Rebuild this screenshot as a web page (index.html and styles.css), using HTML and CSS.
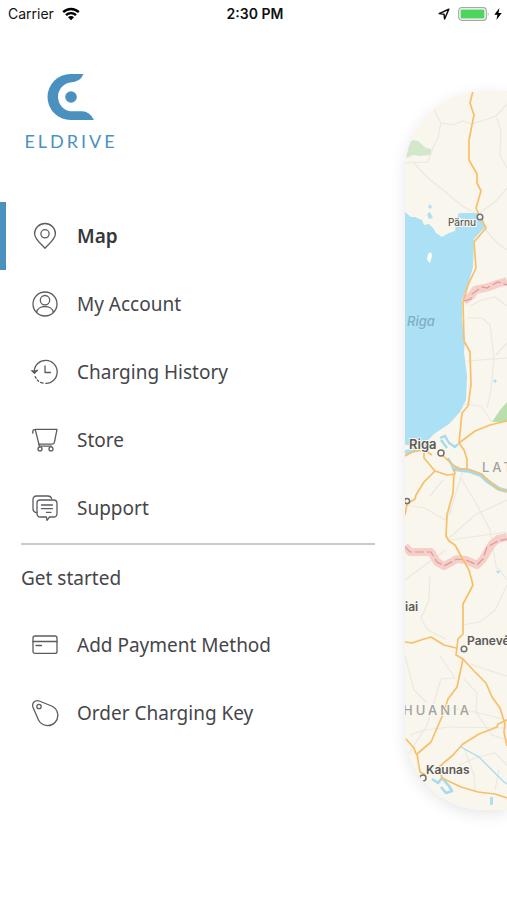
FILE: index.html
```
<!DOCTYPE html>
<html lang="en">
<head>
<meta charset="utf-8">
<meta name="viewport" content="width=device-width, initial-scale=1">
<title>Eldrive</title>
<link rel="stylesheet" href="styles.css">
</head>
<body>
<div class="app">
  <header class="status">
    <div class="status-left">
      <span>Carrier</span>
      <svg width="18" height="14" viewBox="0 0 18 14" aria-hidden="true">
        <g fill="none" stroke="#000" stroke-width="2.4">
          <path d="M1.2 5.2A11.2 11.2 0 0 1 16.8 5.2"/>
          <path d="M4 8.2A7 7 0 0 1 14 8.2"/>
        </g>
        <path d="M9 13.2L6 10.2A4.2 4.2 0 0 1 12 10.2Z"/>
      </svg>
    </div>
    <time class="status-time">2:30 PM</time>
    <div class="status-right">
      <svg width="12" height="12" viewBox="0 0 12 12" aria-hidden="true"><path d="M10.8 1.2L1.2 5.6L6 6.2L6.6 11Z" fill="none" stroke="#111" stroke-width="1.5" stroke-linejoin="round"/></svg>
      <svg width="32" height="14" viewBox="0 0 32 14" aria-hidden="true">
        <rect x=".7" y=".7" width="27.6" height="12.6" rx="3" fill="#fff" stroke="#a8a8a8" stroke-width="1.2"/>
        <rect x="2.6" y="2.6" width="23.8" height="8.8" rx="1" fill="#4cd55f"/>
        <path d="M29.8 4.8Q31.6 7 29.8 9.2Z" fill="#a8a8a8"/>
      </svg>
      <svg width="8" height="12" viewBox="0 0 8 12" aria-hidden="true"><path d="M5.4 0L.3 6.7H3.4L2.4 12L7.7 5.1H4.5Z"/></svg>
    </div>
  </header>

  <div class="body">
    <div class="drawer">
      <div class="brand">
        <svg width="48" height="48" viewBox="0 0 48 48" aria-hidden="true">
          <path d="M36.500 1H23.500A23 23 0 0 0 23.500 47H47Q42.500 38.300 35 38.300H23.500A14.600 14.600 0 0 1 23.500 9.400Q33 9.400 36.500 1Z" fill="#4b91bf"/>
          <circle cx="24" cy="24" r="5.800" fill="#4b91bf"/>
        </svg>
        <span class="wordmark">ELDRIVE</span>
      </div>

      <nav class="menu" aria-label="Main">
        <a class="item active" href="#map">
          <svg class="icon" viewBox="0 0 28 28" aria-hidden="true"><path d="M14 26.300C9.500 21.200 3.600 17.200 3.600 11.800A10.400 10.300 0 0 1 24.400 11.800C24.400 17.200 18.500 21.200 14 26.300Z"/><circle cx="14" cy="11.800" r="4.100"/></svg>
          <span>Map</span>
        </a>
        <a class="item" href="#account">
          <svg class="icon" viewBox="0 0 28 28" aria-hidden="true"><circle cx="14" cy="14" r="12"/><circle cx="14" cy="10.200" r="4.700"/><path d="M5.600 22.400C6.600 14.500 21.400 14.500 22.400 22.400"/></svg>
          <span>My Account</span>
        </a>
        <a class="item" href="#history">
          <svg class="icon" viewBox="0 0 28 28" aria-hidden="true"><path d="M3.200 13.500A11.500 11.500 0 1 1 14.800 25.400"/><path d="M12 25.200L9.600 24.400M7.600 23.200L6.300 22M5 20.300L4.200 18.600M14 8V14.500H19.500"/><path d="M.7 12.600L3.400 15.400L6.400 12.300L3.400 13.300Z" fill="#5b5c60"/></svg>
          <span>Charging History</span>
        </a>
        <a class="item" href="#store">
          <svg class="icon" viewBox="0 0 28 28" aria-hidden="true"><path d="M1.800 7.200V5.800Q1.800 3.400 4.200 3.400H26L23.400 16.400Q23 18.200 21 18.200H7.600M4.200 3.400L8.400 20.200H20.500M8.400 20.200V21"/><circle cx="9" cy="22.900" r="2"/><circle cx="20" cy="22.900" r="2"/></svg>
          <span>Store</span>
        </a>
        <a class="item" href="#support">
          <svg class="icon" viewBox="0 0 28 28" aria-hidden="true"><path d="M9 6H22.500Q26 6 26 9.500V19.500Q26 23 22.500 23H18.500L16 26.300L15.400 23H9.500Q6 23 6 19.500V9Q6 6 9 6Z"/><path d="M6 18.600H5Q2 17.800 2 14.600V5.500Q2 2 5.500 2H17Q19.800 2 20.600 4.600M10.500 11H21.500M10.500 14.600H21.500M15.500 18.300H20"/></svg>
          <span>Support</span>
        </a>
      </nav>

      <hr class="divider">

      <h2 class="section">Get started</h2>
      <nav class="menu" aria-label="Get started">
        <a class="item" href="#payment">
          <svg class="icon" viewBox="0 0 28 28" aria-hidden="true"><rect x="2" y="5" width="24" height="17.400" rx="2"/><path d="M2 10.500H26M5 14.500H10.500"/></svg>
          <span>Add Payment Method</span>
        </a>
        <a class="item" href="#key">
          <svg class="icon" viewBox="0 0 28 28" aria-hidden="true"><path d="M2 8.200C.4 4.200 4.200.4 8.200 2L20.600 7A10.200 10.200 0 1 1 7.400 20.800Z"/><circle cx="8" cy="7.500" r="2.200"/></svg>
          <span>Order Charging Key</span>
        </a>
      </nav>
    </div>

    <main class="map">
      <svg class="map-art" viewBox="405 91 102 719" preserveAspectRatio="xMinYMin slice" role="img" aria-label="Map of Latvia and Lithuania">
        <rect x="405" y="91" width="600" height="719" fill="#f9f6ed"/>
        <g fill="#d3e8ca">
          <path d="M405 157L408 143L413 140L418 141L426 148L431 149V155L420 156L413 155L407 158Z"/>
          <path d="M492 422L500 410L507 402V422Z" fill="#b9dfae"/>
        </g>
        <g fill="#ace0f4">
          <path d="M405 212L411 217H415L422 220L424 225L429 224L433 228L436 233L442 237L449 233L455 231L456 224L465 222L473 220L457 218L459 213H478L483 218L485 227L474 239L473 267L468 285L462 300L462 320L465 341L464 352L467 376L466 400L460 412L449 424L434 434L423 445H405Z"/>
          <path d="M430 204L432 207L430 209L428 207ZM430 212L433 218L429 219L427 214Z"/><circle cx="495" cy="381" r="1.600"/><path d="M496 571L501 570L498 574Z"/>
          <path d="M490 797H493V805H490Z"/>
        </g>
        <path d="M428 254L431 252L432 256L430 263L427 260Z" fill="#fff"/>
        <path d="M405 453L420 448L435 442" stroke="#ace0f4" stroke-width="5" fill="none"/>
        <g fill="none" stroke="#ebe8e2" stroke-width="1.200">
          <path d="M434 110L441 123L438 138L434 145L428 162L405 163M441 123L453 125L463 121L471 124L488 119L496 116L507 104M497 118L501 132L500 155L507 168M413 162L428 178L443 190L462 206L475 213M480 213L497 200L507 188M484 228L497 243L507 250"/>
          <path d="M470 306L482 300L495 297L507 306M467 318L482 318L490 325L494 358L491 390L487 408M507 343L496 355M467 361L507 358M463 404L481 406L492 422M461 478L477 505L490 530L496 566L507 580M449 538L475 515L507 500M405 505L425 508L445 520L452 511M450 540L507 532M450 512L463 470M430 496L443 480"/>
          <path d="M405 580L425 565L446 550M430 575L429 600L421 618L428 630L446 639M462 625L480 622L495 610L507 585M440 656L455 678L441 679L427 725L405 760M405 656L414 690L427 703M471 664L491 671L507 676M464 679L477 693L476 712L492 735L507 740M452 708L475 712L507 720M410 735L425 730L450 727L507 728M459 765L475 758L495 753L507 765M475 790L474 775L465 750M495 790L499 770"/>
        </g>
        <g fill="none" stroke="#a5daef" stroke-width="2">
          <path d="M440 438L445 436L449 443L455 447L458 444M441 440L447 448M448 458L452 465L454 471" stroke-width="2.400"/>
          <path d="M454 469L470 471L481 475L487 481L499 489L507 491" stroke-width="4"/>
          <path d="M461 747L479 757L490 768L504 782L507 784" stroke-width="1.200"/>
          <path d="M432 779L438 783L442 778L449 786L452 791L446 793L441 787" stroke-width="2.600" stroke-linejoin="round"/>
        </g>
        <g fill="none" stroke="#f7cfca" stroke-width="8" stroke-linejoin="round">
          <path d="M464 301L472 295L475 290L489 287L497 284L507 281"/>
          <path d="M405 546L410 552L431 552L437 562L444 566L457 559L466 560L477 565L483 559L492 544L498 539L507 537"/>
        </g>
        <g fill="none" stroke="#dd9a96" stroke-width="1.200" stroke-dasharray="9 3">
          <path d="M464 301L471 299L472 294L482 287L487 288L492 285L498 282L507 285"/>
          <path d="M405 547L410 552L431 552L437 562L444 566L457 559L466 560L477 565L483 559L487 547L498 541L507 539"/>
        </g>
        <g fill="none" stroke="#f8bf68" stroke-width="1.700" stroke-linejoin="round">
          <path d="M473 91L470 103L474 115L469 140V160L477 174V183L481 191L476 208L480 217L486 228L474 242L476 268L468 285L463 302L464 341L470 352L471 385L468 406L462 413L459 443L464 450L467 459V470"/>
          <path d="M459 443L475 431L490 425L507 421M405 456L412 452L424 450L432 455M440 453L453 465L460 469L467 469L481 474L489 481L498 489L507 491M424 452L424 458L435 471L447 475L455 474L454 469M435 471L424 482L416 495L415 499L407 504L405 515M454 474L453 493L447 515L446 536L449 541L455 545L461 556L469 570L473 585L463 604L463 634L458 639L456 655L463 659L474 671L486 683L492 697L500 708L505 724L504 732L507 746"/>
          <path d="M405 642L412 643L421 640L431 637L444 645L456 648M463 659L457 687L448 699L444 712L431 742L417 754L420 772L426 775M405 738L414 748L416 754M507 720L498 724L497 727L479 734L463 744L453 755L439 767L442 778L461 787L478 792L495 794L507 798"/>
        </g>
        <g fill="#fbf9f3" stroke="#75726e" stroke-width="1.500">
          <circle cx="480" cy="217" r="2.800"/><circle cx="441" cy="453" r="3"/><circle cx="464" cy="649" r="2.800"/><circle cx="423" cy="778" r="3"/><circle cx="407" cy="501" r="2.600"/>
        </g>
        <g class="places">
          <text x="448" y="226" class="small">Pärnu</text>
          <text x="407" y="326" class="gulf">Riga</text>
          <text x="409" y="449" class="city">Riga</text>
          <text x="482" y="472" class="country">LATVIA</text>
          <text x="405" y="611" class="town">iai</text>
          <text x="467" y="645" class="town">Panevėžys</text>
          <text x="403" y="715" class="country">HUANIA</text>
          <text x="426" y="774" class="town">Kaunas</text>
        </g>
      </svg>
    </main>
  </div>
</div>
</body>
</html>
```
FILE: styles.css
```
* { box-sizing: border-box; }

body {
  margin: 0;
  background: #fff;
  color: #45464a;
  font-family: "Noto Sans", "Open Sans", sans-serif;
}

.app {
  min-height: 100vh;
  overflow: hidden;
}

.status {
  display: grid;
  grid-template-columns: 1fr auto 1fr;
  align-items: center;
  height: 28px;
  padding: 0 5px 0 8px;
  color: #111;
  font: 14px/20px Inter, sans-serif;
}

.status-left,
.status-right {
  display: flex;
  align-items: center;
  gap: 8px;
}

.status-right { justify-content: flex-end; gap: 4px; }
.status-right svg:first-child { margin-right: 4px; }
.status-time { font-weight: 600; }

.body {
  display: grid;
  grid-template-columns: 1fr 102px;
  align-items: start;
}

.brand {
  display: flex;
  flex-direction: column;
  align-items: center;
  gap: 4px;
  width: 142px;
  height: 174px;
  padding-top: 45px;
}

.wordmark {
  color: #4b91bf;
  font: 400 18px/32px Lato, sans-serif;
  letter-spacing: 3px;
}

.item {
  display: flex;
  align-items: center;
  gap: 18px;
  height: 68px;
  padding-left: 25px;
  border-left: 6px solid transparent;
  color: inherit;
  font-size: 19px;
  line-height: 28px;
  text-decoration: none;
}

.active {
  border-left-color: #4b91bf;
  color: #36373b;
  font-weight: 600;
}

.icon {
  flex: none;
  width: 28px;
  height: 28px;
  fill: none;
  stroke: #5b5c60;
  stroke-width: 1.3;
  stroke-linecap: round;
  stroke-linejoin: round;
}

.divider {
  height: 2px;
  margin: 1px 30px 0 21px;
  border: 0;
  background: #cbcbcb;
}

.section {
  margin: 0;
  padding-left: 21px;
  font-size: 19px;
  font-weight: 400;
  line-height: 66px;
}

.map {
  height: 719px;
  margin-top: 63px;
  overflow: hidden;
  border-radius: 80px 0 0 80px;
  box-shadow: 0 4px 16px rgba(0, 0, 0, 0.1);
}

.map-art {
  display: block;
  width: 100%;
  height: 100%;
}

.places {
  fill: #5c5a58;
  stroke: #faf7ef;
  stroke-width: 2px;
  paint-order: stroke;
  font-family: Inter, sans-serif;
  font-weight: 600;
}

.small { font-size: 10px; font-weight: 500; }
.town { font-size: 12px; }
.city { font-size: 13px; }

.gulf {
  fill: #7fafc2;
  stroke: none;
  font-size: 13px;
  font-style: italic;
  font-weight: 500;
}

.country {
  fill: #a3a19d;
  font-size: 13px;
  font-weight: 500;
  letter-spacing: 3px;
}
```
